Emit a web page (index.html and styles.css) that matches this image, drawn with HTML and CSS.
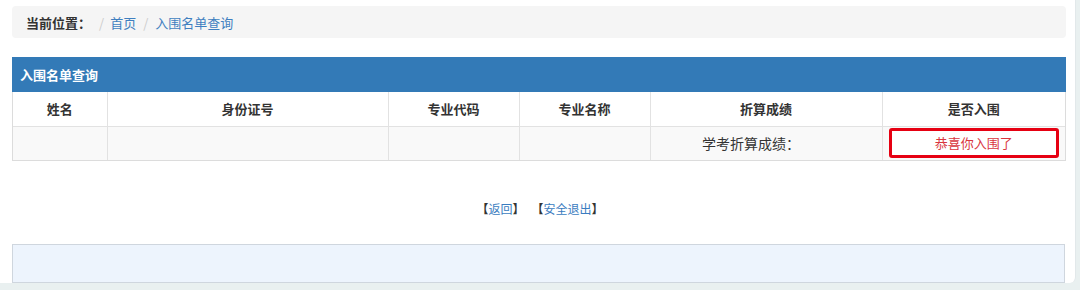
FILE: index.html
```html
<!DOCTYPE html>
<html lang="zh-CN">
<head>
<meta charset="utf-8">
<title>入围名单查询</title>
<link rel="stylesheet" href="styles.css">
</head>
<body>
<div class="page">
  <div class="breadcrumb">
    <span class="bc-label">当前位置：</span>
    <span class="bc-sep first">/</span>
    <a class="bc-link" href="#">首页</a>
    <span class="bc-sep">/</span>
    <a class="bc-link" href="#">入围名单查询</a>
  </div>

  <div class="panel">
    <div class="panel-head">入围名单查询</div>
    <table class="grid">
      <colgroup>
        <col class="c1"><col class="c2"><col class="c3"><col class="c4"><col class="c5"><col class="c6">
      </colgroup>
      <thead>
        <tr>
          <th>姓名</th><th>身份证号</th><th>专业代码</th><th>专业名称</th><th>折算成绩</th><th>是否入围</th>
        </tr>
      </thead>
      <tbody>
        <tr>
          <td></td><td></td><td></td><td></td>
          <td class="score">学考折算成绩：</td>
          <td class="result-cell"><div class="result">恭喜你入围了</div></td>
        </tr>
      </tbody>
    </table>
  </div>

  <div class="actions">
    <span class="group"><span class="br">【</span><a href="#">返回</a><span class="br">】</span></span>
    <span class="group gap"><span class="br">【</span><a href="#">安全退出</a><span class="br">】</span></span>
  </div>

  <div class="footer-box"></div>
</div>
</body>
</html>
```

FILE: styles.css
```css
* { box-sizing: border-box; }
html, body {
  margin: 0;
  padding: 0;
  background: #e9f0f0;
  height: 290px;
  overflow: hidden;
}
body {
  font-family: "Noto Sans CJK SC", "Noto Sans", sans-serif;
  font-size: 13px;
  color: #333;
}
a { text-decoration: none; color: #3a7cc0; }

.page {
  width: 1076px;
  height: 283px;
  background: #fff;
  border-right: 1px solid #e2e8ea;
  border-bottom-right-radius: 6px;
  padding: 6px 10px 0 12px;
  display: flex;
  flex-direction: column;
}

.breadcrumb {
  height: 32px;
  width: 1054px;
  background: #f5f5f5;
  border-radius: 4px;
  display: flex;
  align-items: center;
  padding-left: 14px;
  font-size: 13px;
}
.bc-label { font-weight: bold; color: #333; }
.bc-sep { color: #ccc; padding: 0 7px; }
.bc-sep.first { padding: 0 6px 0 8px; }
.bc-link { color: #3f7fc0; }

.panel {
  margin-top: 19px;
  width: 1054px;
  border: 1px solid #dcdcdc;
  border-top: none;
}
.panel-head {
  height: 35px;
  background: #337ab7;
  color: #fff;
  font-weight: bold;
  font-size: 13px;
  display: flex;
  align-items: center;
  padding-left: 8px;
  margin: 0 -1px;
}
.grid {
  width: 100%;
  border-collapse: collapse;
  table-layout: fixed;
}
.c1 { width: 94px; }
.c2 { width: 281px; }
.c3 { width: 131px; }
.c4 { width: 131px; }
.c5 { width: 232px; }
.c6 { width: 183px; }
.grid th, .grid td {
  height: 34px;
  border: 1px solid #e2e2e2;
  text-align: center;
  padding: 0;
  font-size: 13px;
}
.grid tr > :first-child { border-left: none; }
.grid tr > :last-child { border-right: none; }
.grid thead th { border-top: none; font-weight: bold; color: #333; background: #fff; }
.grid tbody td { background: #f9f9f9; border-bottom: none; color: #333; }
.grid td.score { padding-right: 30px; font-size: 14px; }
.grid td.result-cell { padding: 1px 6px 2px 6px; }
.result {
  height: 30px;
  border: 3px solid #e60012;
  border-radius: 3px;
  background: #fff;
  color: #d9363e;
  display: flex;
  align-items: center;
  justify-content: center;
  font-size: 13px;
}

.actions {
  margin-top: 40px;
  width: 1054px;
  display: flex;
  justify-content: center;
  font-size: 12px;
  line-height: 16px;
  padding-left: 2px;
}
.actions .gap { margin-left: 7px; }
.actions .br { color: #333; font-weight: bold; }
.actions a { color: #3a7cc0; }

.footer-box {
  margin-top: 27px;
  width: 1053px;
  height: 39px;
  background: #edf4fd;
  border: 1px solid #cfd6de;
}
```
